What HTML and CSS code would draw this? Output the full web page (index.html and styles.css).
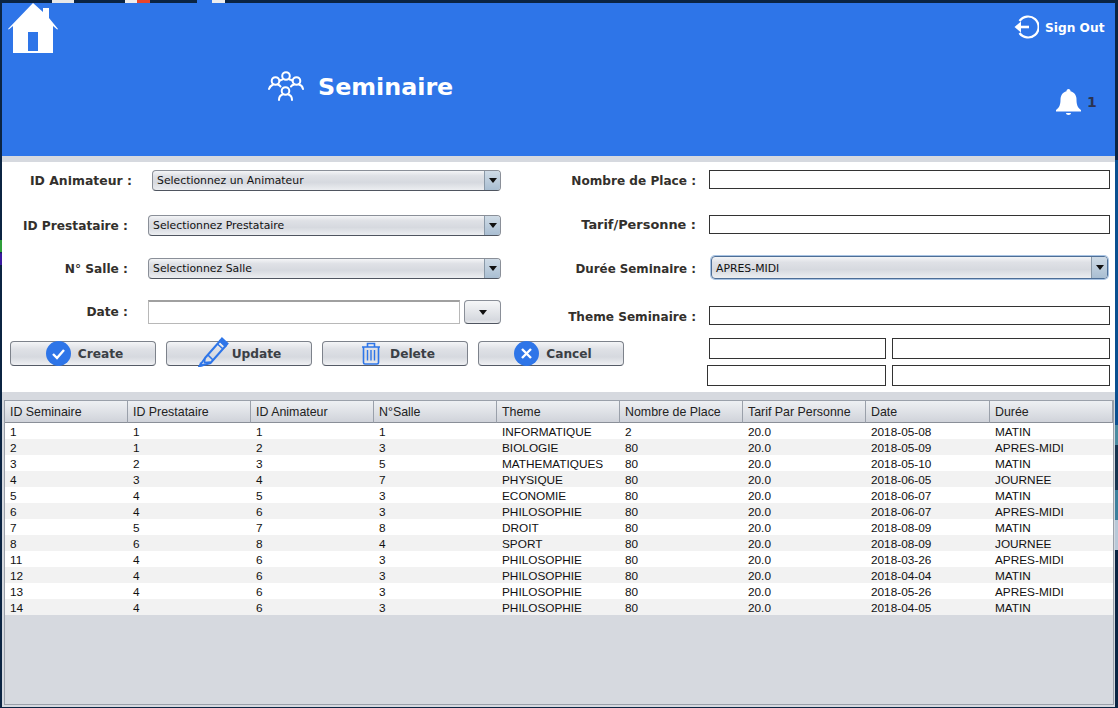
FILE: index.html
```html
<!DOCTYPE html>
<html lang="fr">
<head>
<meta charset="utf-8">
<title>Seminaire</title>
<link rel="stylesheet" href="styles.css">
</head>
<body>
<div class="desktop-strip"><i class="bit bit-a"></i><i class="bit bit-b"></i><i class="bit bit-c"></i><i class="bit bit-d"></i><i class="bit bit-e"></i></div>
<main class="window">
  <header class="header">
    <svg class="home-icon" viewBox="0 0 50 50"><path fill="#fff" d="M25 0 35 9V5h6v10l9 11-.8.6L45 23v27H5V23L.8 26.6 0 26Z"/><rect x="20" y="29" width="10" height="19" fill="#2e75e8"/></svg>
    <div class="title-block">
      <svg class="people-icon" viewBox="0 0 36 30" fill="none" stroke="#fff" stroke-width="2" stroke-linecap="round">
        <circle cx="18" cy="5" r="3.8"/><circle cx="7.5" cy="10" r="3.8"/><circle cx="28.5" cy="10" r="3.8"/><circle cx="17.5" cy="20" r="3.8"/>
        <path d="M1 18c1-3 3-4 4-4.500M10 13.500c1 .5 2 1 2.500 2M12 9.500c1-.5 2-1 2.500-1M21.500 8.500c1 0 2 .5 2.500 1M23 15.500c.5-1 1.500-1.500 3-2M31 13.500c2 .5 3.500 2 4 4.500M11 29c0-3 2-5 3.500-5.500M24 29c0-3-2-5-3.500-5.500"/>
      </svg>
      <h1 class="title">Seminaire</h1>
    </div>
    <div class="actions">
      <div class="signout">
        <svg class="signout-icon" viewBox="0 0 25 24" fill="none" stroke="#fff" stroke-width="2.200"><path d="M5.500 6A10.500 10.500 0 1 1 5.500 18"/><path d="M15 12H3" stroke-width="2.600"/><path d="M7 6.500 0.500 12 7 17.500Z" fill="#fff" stroke="none"/></svg>
        <span class="signout-text">Sign Out</span>
      </div>
      <div class="notif">
        <svg class="bell-icon" viewBox="0 0 25 26"><path fill="#fff" d="M12.500 0c1.300 0 2 1 2 2.200 4 1 6 4.300 6 8.300 0 5 1 8 4.500 10.500v1.500H0V21c3.500-2.500 4.500-5.500 4.500-10.500 0-4 2-7.300 6-8.300C10.500 1 11.200 0 12.500 0Z"/><path fill="#fff" d="M10 24h5c0 1.300-1 2-2.500 2S10 25.300 10 24Z"/></svg>
        <span class="notif-count">1</span>
      </div>
    </div>
  </header>
  <div class="divider"></div>
  <section class="form">
    <div class="form-top">
      <div class="col-left">
        <div class="row row-animateur">
          <label class="label label-wide">ID Animateur :</label>
          <div class="combo combo-short"><span class="combo-text">Selectionnez un Animateur</span><span class="combo-arrow"><i class="tri"></i></span></div>
        </div>
        <div class="row row-prestataire">
          <label class="label">ID Prestataire :</label>
          <div class="combo"><span class="combo-text">Selectionnez Prestataire</span><span class="combo-arrow"><i class="tri"></i></span></div>
        </div>
        <div class="row row-salle">
          <label class="label">N° Salle :</label>
          <div class="combo"><span class="combo-text">Selectionnez Salle</span><span class="combo-arrow"><i class="tri"></i></span></div>
        </div>
        <div class="row row-date">
          <label class="label">Date :</label>
          <div class="date-input"></div>
          <div class="date-btn"><i class="tri"></i></div>
        </div>
      </div>
      <div class="col-right">
        <div class="row-r row-nombre">
          <label class="label-r">Nombre de Place :</label>
          <div class="field"></div>
        </div>
        <div class="row-r row-tarif">
          <label class="label-r label-r-flat">Tarif/Personne :</label>
          <div class="field"></div>
        </div>
        <div class="row-r row-duree">
          <label class="label-r label-r-duree">Durée Seminaire :</label>
          <div class="combo combo-focus"><span class="combo-text">APRES-MIDI</span><span class="combo-arrow"><i class="tri"></i></span></div>
        </div>
        <div class="row-r row-theme">
          <label class="label-r label-r-low">Theme Seminaire :</label>
          <div class="field"></div>
        </div>
      </div>
    </div>
    <div class="form-bottom">
      <div class="buttons">
        <button class="btn btn-create"><svg class="btn-icon" viewBox="0 0 25 25"><circle cx="12.500" cy="12.500" r="12.500" fill="#2e75e8"/><path d="M7 13l4 4 7-8" fill="none" stroke="#fff" stroke-width="2.400"/></svg><span>Create</span></button>
        <button class="btn btn-update"><svg class="pencil-icon" viewBox="0 0 31 30" fill="none" stroke="#2e75e8" stroke-width="2"><path d="M7 21 22 4l5.500 5L12.500 26 1.500 29Z"/><path d="M19.500 7l5.500 5M10 18l5 5M7 21l-.5 4.500 6-.5" stroke-width="1.600"/><path d="M24 1.500 29.500 6.500 27.500 9 22 4Z" fill="#2e75e8"/><path d="M1 30l1-5 4 4Z" fill="#2e75e8" stroke="none"/></svg><span>Update</span></button>
        <button class="btn btn-delete"><svg class="trash-icon" viewBox="0 0 20 23" fill="none" stroke="#2e75e8" stroke-width="1.600"><path d="M1 5h18M6.500 4.500V1.500h7v3" /><path d="M2.500 5v15.500q0 1.500 1.500 1.500h12q1.500 0 1.500-1.500V5"/><path d="M6.500 8v10.500M10 8v10.500M13.500 8v10.500" stroke-width="1.400"/></svg><span>Delete</span></button>
        <button class="btn btn-cancel"><svg class="btn-icon" viewBox="0 0 25 25"><circle cx="12.500" cy="12.500" r="12.500" fill="#2e75e8"/><path d="M8 8l9 9M17 8l-9 9" fill="none" stroke="#fff" stroke-width="2.400"/></svg><span>Cancel</span></button>
      </div>
      <div class="extra-fields">
        <div class="extra-row extra-row-a"><div class="field field-a"></div><div class="field field-b"></div></div>
        <div class="extra-row"><div class="field field-c"></div><div class="field field-b"></div></div>
      </div>
    </div>
  </section>
  <section class="table-area">
    <div class="table-box">
      <table class="grid">
        <thead><tr><th>ID Seminaire</th><th>ID Prestataire</th><th>ID Animateur</th><th>N°Salle</th><th>Theme</th><th>Nombre de Place</th><th>Tarif Par Personne</th><th>Date</th><th>Durée</th></tr></thead>
        <tbody>
          <tr><td>1</td><td>1</td><td>1</td><td>1</td><td>INFORMATIQUE</td><td>2</td><td>20.0</td><td>2018-05-08</td><td>MATIN</td></tr>
          <tr><td>2</td><td>1</td><td>2</td><td>3</td><td>BIOLOGIE</td><td>80</td><td>20.0</td><td>2018-05-09</td><td>APRES-MIDI</td></tr>
          <tr><td>3</td><td>2</td><td>3</td><td>5</td><td>MATHEMATIQUES</td><td>80</td><td>20.0</td><td>2018-05-10</td><td>MATIN</td></tr>
          <tr><td>4</td><td>3</td><td>4</td><td>7</td><td>PHYSIQUE</td><td>80</td><td>20.0</td><td>2018-06-05</td><td>JOURNEE</td></tr>
          <tr><td>5</td><td>4</td><td>5</td><td>3</td><td>ECONOMIE</td><td>80</td><td>20.0</td><td>2018-06-07</td><td>MATIN</td></tr>
          <tr><td>6</td><td>4</td><td>6</td><td>3</td><td>PHILOSOPHIE</td><td>80</td><td>20.0</td><td>2018-06-07</td><td>APRES-MIDI</td></tr>
          <tr><td>7</td><td>5</td><td>7</td><td>8</td><td>DROIT</td><td>80</td><td>20.0</td><td>2018-08-09</td><td>MATIN</td></tr>
          <tr><td>8</td><td>6</td><td>8</td><td>4</td><td>SPORT</td><td>80</td><td>20.0</td><td>2018-08-09</td><td>JOURNEE</td></tr>
          <tr><td>11</td><td>4</td><td>6</td><td>3</td><td>PHILOSOPHIE</td><td>80</td><td>20.0</td><td>2018-03-26</td><td>APRES-MIDI</td></tr>
          <tr><td>12</td><td>4</td><td>6</td><td>3</td><td>PHILOSOPHIE</td><td>80</td><td>20.0</td><td>2018-04-04</td><td>MATIN</td></tr>
          <tr><td>13</td><td>4</td><td>6</td><td>3</td><td>PHILOSOPHIE</td><td>80</td><td>20.0</td><td>2018-05-26</td><td>APRES-MIDI</td></tr>
          <tr><td>14</td><td>4</td><td>6</td><td>3</td><td>PHILOSOPHIE</td><td>80</td><td>20.0</td><td>2018-04-05</td><td>MATIN</td></tr>
        </tbody>
      </table>
    </div>
  </section>
</main>
</body>
</html>
```
FILE: styles.css
```css
* { box-sizing: border-box; }
html, body { height: 100%; }
body {
  margin: 0;
  background:
    linear-gradient(#0b2442 240px, #2f9e3a 240px, #2f9e3a 252px, #0b2442 252px, #3a1aa0 254px, #3a1aa0 265px, #0b2442 265px) left top / 2px 100% no-repeat,
    linear-gradient(#0b2442 160px, #0a4f8f 160px, #0a4f8f 425px, #4a8aa0 425px, #4a8aa0 445px, #16344f 445px, #16344f 490px, #3c7f9c 490px, #3c7f9c 520px, #b7c8d8 520px, #b7c8d8 550px, #0b2442 550px) right top / 3px 100% no-repeat,
    #0b2442;
  overflow: hidden;
  font-family: "DejaVu Sans", sans-serif;
}
.desktop-strip { height: 3px; display: flex; padding-left: 52px; }
.bit { display: block; height: 3px; }
.bit-a { width: 22px; background: #e8e8e8; margin-right: 51px; }
.bit-b { width: 12px; background: #eee; }
.bit-c { width: 13px; background: #e8452c; margin-right: 47px; }
.bit-d { width: 15px; background: #2e75e8; }
.bit-e { width: 13px; background: #eee; }
.window {
  margin-left: 2px;
  width: 1113px;
  height: 704px;
  background: #d6d9df;
  display: flex;
  flex-direction: column;
}
.header {
  height: 153px;
  background: #2e75e8;
  display: flex;
  flex: none;
}
.home-icon { width: 50px; height: 50px; margin-left: 6px; flex: none; }
.title-block { display: flex; align-items: center; gap: 14px; margin-left: 210px; margin-top: 68px; height: 30px; }
.people-icon { width: 36px; height: 30px; flex: none; }
.title { margin: 2px 0 0; font-size: 23.800px; font-weight: 700; color: #fff; line-height: 30px; }
.actions { margin-left: auto; display: flex; flex-direction: column; align-items: flex-start; width: 104px; margin-right: -3px; padding-top: 12px; }
.signout { display: flex; align-items: center; gap: 6px; color: #fff; font-size: 12.200px; font-weight: 700; height: 24px; white-space: nowrap; }
.signout-text { padding-top: 2px; }
.signout-icon { width: 25px; height: 24px; flex: none; }
.notif { display: flex; align-items: center; gap: 6px; margin-top: 50px; margin-left: 42px; height: 26px; }
.bell-icon { width: 25px; height: 26px; flex: none; }
.notif-count { font-size: 14px; font-weight: 700; color: #2b3350; }
.divider { height: 6px; flex: none; background: #d6d9df; }
.form { height: 230px; flex: none; background: #fff; }
.form-top { height: 176px; display: flex; }
.col-left { width: 500px; padding-top: 8px; display: flex; flex-direction: column; }
.row { display: flex; align-items: center; height: 21px; gap: 20px; }
.row-prestataire { margin-top: 24px; }
.row-salle { margin-top: 22px; }
.row-date { margin-top: 21px; height: 24px; gap: 0; }
.label {
  width: 126px; text-align: right; font-size: 12.200px; font-weight: 700; color: #33302c; flex: none; white-space: nowrap;
}
.label-wide { width: 130px; font-size: 12.450px; }
.row-date .label { margin-right: 20px; }
.combo {
  width: 353px;
  height: 21px;
  border: 1px solid #8a8f98;
  border-bottom-color: #4f5560;
  border-radius: 4px;
  background: linear-gradient(#f4f5f7 0, #dfe1e6 25%, #d6d9df 60%, #eceef1 100%);
  display: flex;
  align-items: center;
  overflow: hidden;
  flex: none;
}
.combo-short { width: 349px; }
.combo-text { flex: 1; padding-left: 4px; font-size: 10.850px; color: #111; white-space: nowrap; }
.combo-arrow {
  width: 16px; height: 100%; flex: none;
  background: linear-gradient(#cfdbe6, #a9bed2);
  border-left: 1px solid #8a99a8;
  display: flex; align-items: center; justify-content: center;
}
.tri { display: block; width: 0; height: 0; border-left: 4px solid transparent; border-right: 4px solid transparent; border-top: 5px solid #111; }
.date-input { width: 312px; height: 24px; flex: none; background: #fff; border: 1px solid #b8b8b8; border-top: 2px solid #a0a0a0; }
.date-btn {
  width: 37px; height: 24px; margin-left: 4px; flex: none;
  border: 1px solid #8a8f98; border-bottom-color: #4f5560; border-radius: 4px;
  background: linear-gradient(#f6f7f8, #d6d9df 85%, #e8eaed);
  display: flex; align-items: center; justify-content: center;
}
.col-right { flex: 1; padding-top: 8px; display: flex; flex-direction: column; }
.row-r { display: flex; align-items: center; gap: 13px; height: 19px; }
.row-tarif { margin-top: 26px; }
.row-duree { margin-top: 22px; height: 23px; }
.row-theme { margin-top: 27px; }
.label-r { width: 194px; padding-top: 2px; text-align: right; font-size: 12.100px; font-weight: 700; color: #33302c; flex: none; white-space: nowrap; }
.label-r-flat { padding-top: 0; font-size: 12.900px; }
.label-r-duree { font-size: 11.850px; }
.label-r-low { padding-top: 2px; }
.field { width: 401px; height: 19px; border: 1px solid #333; background: #fff; flex: none; }
.combo-focus {
  width: 397px; height: 23px; margin-left: 2px;
  border: 1px solid #4d6e96;
  box-shadow: 0 0 0 1px #a9c4e4;
}
.combo-focus .combo-text { padding-left: 4px; padding-top: 2px; }
.form-bottom { height: 54px; display: flex; padding-left: 8px; }
.buttons { display: flex; gap: 10px; padding-top: 3px; flex: none; width: 614px; }
.btn {
  width: 146px; height: 25px; padding: 0;
  border: 1px solid #7d828b; border-bottom-color: #555b66; border-radius: 4px;
  background: linear-gradient(#f4f5f7 0, #dfe1e6 30%, #d6d9df 65%, #eff0f3 100%);
  display: flex; align-items: center; justify-content: center; gap: 7px;
  font-family: "DejaVu Sans", sans-serif; font-size: 12.200px; font-weight: 700; color: #3b3f45;
  overflow: visible;
}
.btn-create { padding-left: 3px; }
.btn-icon { width: 25px; height: 25px; flex: none; }
.pencil-icon { width: 31px; height: 30px; flex: none; margin-top: -3px; }
.trash-icon { width: 20px; height: 23px; flex: none; margin-top: -1px; }
.btn-update { gap: 3px; padding-left: 1px; }
.btn-delete { gap: 9px; padding-left: 6px; }
.btn-cancel { padding-left: 4px; }
.extra-fields { display: flex; flex-direction: column; gap: 6px; margin-left: 83px; }
.extra-row { display: flex; gap: 6px; height: 21px; }
.extra-row-a { margin-left: 2px; }
.extra-row .field { height: 21px; }
.field-a { width: 177px; }
.field-b { width: 218px; }
.field-c { width: 179px; }
.table-area { flex: 1; padding: 8px 1px 2px 2px; display: flex; min-height: 0; background: #d6d9df; }
.table-box { flex: 1; border: 1px solid #9aa0aa; overflow: hidden; background: #d6d9df; }
.grid { border-collapse: separate; border-spacing: 0; table-layout: fixed; width: 1108px; font-family: "Liberation Sans", Arial, sans-serif; font-size: 11.800px; color: #111; }
.grid th {
  width: 123px; height: 22px; padding: 0 0 0 5px; text-align: left; font-weight: 400; font-size: 12.400px; color: #222;
  background: linear-gradient(#eef0f3, #d6d9df 80%, #cfd2d9);
  border-right: 1px solid #9aa0aa;
  border-bottom: 1px solid #8a8f98;
  white-space: nowrap;
}
.grid th:nth-child(8) { width: 124px; }
.grid td { height: 16px; padding: 2px 0 0 5px; line-height: 14px; white-space: nowrap; background: #fff; }
.grid tbody tr:nth-child(even) td { background: #f2f2f2; }
```
